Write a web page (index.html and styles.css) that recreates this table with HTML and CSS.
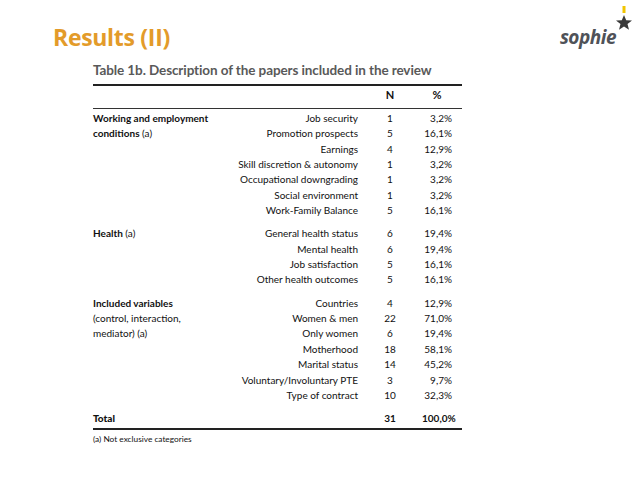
FILE: index.html
```html
<!DOCTYPE html>
<html>
<head>
<meta charset="utf-8">
<link rel="stylesheet" href="styles.css">
</head>
<body>
<div class="slide">
  <header class="top">
    <h1 class="title">Results (II)</h1>
    <div class="logo">
      <span class="logo-text">sophie</span>
      <svg class="logo-star" width="20" height="28" viewBox="0 0 20 28">
        <rect x="8.5" y="0" width="3" height="7" fill="#f2c500"/>
        <polygon points="10,9 12.2,14.2 18,14.5 13.5,18.1 15,23.8 10,20.6 5,23.8 6.5,18.1 2,14.5 7.8,14.2" fill="#3a3a3a"/>
      </svg>
    </div>
  </header>
  <section class="table-block">
    <h2 class="caption">Table 1b. Description of the papers included in the review</h2>
    <div class="table">
      <div class="head">
        <span></span><span></span><span class="n">N</span><span class="pct c">%</span>
      </div>
      <div class="group">
        <div class="cat" style="grid-row: span 7"><b>Working and employment</b><br><b>conditions</b> (a)</div>
        <span class="item">Job security</span><span class="n">1</span><span class="pct">3,2%</span>
        <span class="item">Promotion prospects</span><span class="n">5</span><span class="pct">16,1%</span>
        <span class="item">Earnings</span><span class="n">4</span><span class="pct">12,9%</span>
        <span class="item">Skill discretion &amp; autonomy</span><span class="n">1</span><span class="pct">3,2%</span>
        <span class="item">Occupational downgrading</span><span class="n">1</span><span class="pct">3,2%</span>
        <span class="item">Social environment</span><span class="n">1</span><span class="pct">3,2%</span>
        <span class="item">Work-Family Balance</span><span class="n">5</span><span class="pct">16,1%</span>
      </div>
      <div class="group">
        <div class="cat" style="grid-row: span 4"><b>Health</b> (a)</div>
        <span class="item">General health status</span><span class="n">6</span><span class="pct">19,4%</span>
        <span class="item">Mental health</span><span class="n">6</span><span class="pct">19,4%</span>
        <span class="item">Job satisfaction</span><span class="n">5</span><span class="pct">16,1%</span>
        <span class="item">Other health outcomes</span><span class="n">5</span><span class="pct">16,1%</span>
      </div>
      <div class="group">
        <div class="cat" style="grid-row: span 7"><b>Included variables</b><br>(control, interaction,<br>mediator) (a)</div>
        <span class="item">Countries</span><span class="n">4</span><span class="pct">12,9%</span>
        <span class="item">Women &amp; men</span><span class="n">22</span><span class="pct">71,0%</span>
        <span class="item">Only women</span><span class="n">6</span><span class="pct">19,4%</span>
        <span class="item">Motherhood</span><span class="n">18</span><span class="pct">58,1%</span>
        <span class="item">Marital status</span><span class="n">14</span><span class="pct">45,2%</span>
        <span class="item">Voluntary/Involuntary PTE</span><span class="n">3</span><span class="pct">9,7%</span>
        <span class="item">Type of contract</span><span class="n">10</span><span class="pct">32,3%</span>
      </div>
      <div class="total">
        <span class="cat"><b>Total</b></span><span></span><span class="n">31</span><span class="pct">100,0%</span>
      </div>
    </div>
    <p class="note">(a) Not exclusive categories</p>
  </section>
</div>
</body>
</html>
```

FILE: styles.css
```css
* { box-sizing: border-box; margin: 0; padding: 0; }
html, body { background: #fff; }
body { width: 638px; height: 479px; overflow: hidden; font-family: Lato, "Open Sans", sans-serif; color: #111; }
.slide { position: relative; width: 638px; height: 479px; }
.top { display: flex; justify-content: space-between; align-items: flex-start; padding: 22px 4px 0 53px; height: 60px; }
.title { font-family: "Open Sans", sans-serif; font-weight: 700; font-size: 23px; color: #e39b2a; line-height: 30px; letter-spacing: -0.3px; }
.logo { display: flex; align-items: flex-start; margin-top: -19px; }
.logo-text { font-family: "Open Sans", sans-serif; font-weight: 700; font-style: italic; font-size: 19px; color: #4f5258; margin-top: 21px; letter-spacing: -0.5px; }
.logo-star { margin-left: -2px; margin-top: 3px; }
.table-block { padding-left: 93px; width: 462px; box-sizing: content-box; }
.caption { font-family: Lato, sans-serif; font-weight: 700; font-size: 13.5px; color: #595959; line-height: 18px; margin-top: 1px; letter-spacing: -0.1px; }
.table { margin-top: 5px; width: 369px; border-top: 2px solid #222; }
.head, .group, .total { display: grid; grid-template-columns: 130px 135px 64px 30px; grid-auto-rows: 15.35px; font-size: 10px; line-height: 15.35px; }
.head { height: 23px; align-items: center; border-bottom: 1px solid #333; padding-top: 1px; }
.head .n, .head .pct { font-weight: 700; font-size: 11px; }
.group { padding-top: 2px; padding-bottom: 5px; }
.group + .group { padding-top: 3px; }
.cat { grid-column: 1; line-height: 15.35px; padding-right: 4px; }
.item { grid-column: 2; text-align: right; white-space: nowrap; }
.n { grid-column: 3; text-align: center; }
.pct { grid-column: 4; text-align: right; white-space: nowrap; }
.pct.c { text-align: center; }
.total { padding-top: 3px; height: 22px; border-bottom: 2px solid #222; font-weight: 700; }
.total .cat { grid-column: 1; }
.note { font-size: 8.3px; line-height: 12px; margin-top: 3px; color: #111; }
```
